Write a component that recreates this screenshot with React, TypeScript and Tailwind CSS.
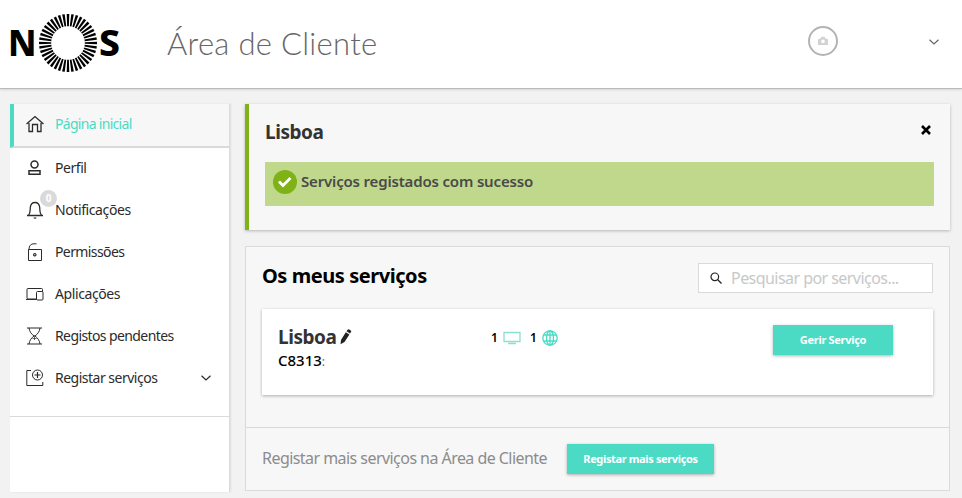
import { ReactNode } from "react";
import clsx from "clsx";

const RAYS = Array.from({ length: 40 }, (_, i) => i * 9);

function Logo() {
  return (
    <svg width="112" height="60" viewBox="-1 0 112 60" className="block">
      <text x="-2" y="43" fontFamily="Noto Sans" fontWeight="800" fontSize="36" textLength="28.5" lengthAdjust="spacingAndGlyphs">N</text>
      {RAYS.map((deg) => (
        <path key={deg} d="M56.700 1h2.600l-.45 12.200h-1.700z" transform={`rotate(${deg} 58 30)`} />
      ))}
      <text x="89" y="43" fontFamily="Noto Sans" fontWeight="800" fontSize="36" textLength="21" lengthAdjust="spacingAndGlyphs">S</text>
    </svg>
  );
}

function Icon({ children, className }: { children: ReactNode; className?: string }) {
  return (
    <svg width="18" height="18" viewBox="0 0 18 18" fill="none" stroke="currentColor" className={clsx("block shrink-0", className)}>
      {children}
    </svg>
  );
}

const HomeIcon = (
  <Icon className="-mt-0.5">
    <path d="M.5 9 9 1.500 17.500 9M3 8v8.500h3.500V9.500h5v7H15V8" strokeWidth="1.300" />
  </Icon>
);
const ProfileIcon = (
  <Icon>
    <circle cx="8.500" cy="5.500" r="3.500" strokeWidth="1.500" />
    <path d="M3 11.800h11v3.400H3z" strokeWidth="1.500" />
  </Icon>
);
const BellIcon = (
  <Icon>
    <path d="M1 14.500h16M2.500 14.300C4.500 12.500 4 10 4.300 6.500 4.600 3.300 6.300 1.500 9 1.500s4.400 1.800 4.700 5c.3 3.500-.2 6 1.800 7.800" strokeWidth="1.300" />
    <path d="M7.500 16.500a1.500 1.300 0 0 0 3 0z" fill="currentColor" stroke="none" />
  </Icon>
);
const LockIcon = (
  <Icon>
    <path d="M2.500 6.500h13v11h-13zM3 6.500C3 2.500 5 .8 8 .8h2.500" />
    <circle cx="8.800" cy="11.700" r="1.200" strokeWidth="1.200" />
  </Icon>
);
const DevicesIcon = (
  <Icon>
    <rect x="1" y="3.500" width="15.500" height="10.500" rx="1" />
    <rect x="10.500" y="6.500" width="6.500" height="8.500" rx="1" fill="#fff" />
    <path d="M0 14.500h10.500" />
  </Icon>
);
const HourglassIcon = (
  <Icon>
    <path d="M1 1h15M1 17h15M3 1c.5 4 2.500 6 5 8-2.500 2-4.500 4-5 8M14 1c-.5 4-2.500 6-5 8 2.500 2 4.500 4 5 8" />
    <path d="M8.500 8v5M6.500 11.500h4" strokeWidth=".7" />
  </Icon>
);
const RegisterIcon = (
  <Icon>
    <path d="M5 1.500H.8v15h16v-3.500" />
    <circle cx="11.500" cy="6" r="5" />
    <path d="M11.500 3v6M8.500 6h6" strokeWidth="1.200" />
  </Icon>
);

const MENU = [
  { title: "Perfil", icon: ProfileIcon, tracking: "tracking-[-0.45px]" },
  { title: "Notificações", icon: BellIcon, badge: 0, tracking: "tracking-[-0.4px]" },
  { title: "Permissões", icon: LockIcon, tracking: "tracking-[-0.6px]" },
  { title: "Aplicações", icon: DevicesIcon, tracking: "tracking-[-0.4px]" },
  { title: "Registos pendentes", icon: HourglassIcon, tracking: "tracking-[-0.6px]" },
  { title: "Registar serviços", icon: RegisterIcon, expandable: true, tracking: "tracking-[-0.5px]" },
];

function Chevron() {
  return (
    <svg width="10" height="6" viewBox="0 0 10 6" fill="none" stroke="currentColor" strokeWidth="1.200" className="block">
      <path d="m.5.700 4.500 4.300L9.500.700" />
    </svg>
  );
}

function Sidebar() {
  return (
    <nav className="h-[388px] w-[220px] shrink-0 border-r border-[#dadada] bg-white text-sm text-[#2b2b2b] shadow-[1px_0_2px_rgba(0,0,0,0.08)]">
      <div className="flex h-11 items-center gap-[11px] border-b-2 border-l-4 border-b-[#dadada] border-l-[#4bdbc5] bg-[#f7f7f7] pl-3">
        {HomeIcon}
        <span className="-mt-0.5 tracking-[-0.7px] text-[#4bdbc5]">Página inicial</span>
      </div>
      <div className="-mt-px h-[270px] border-b border-[#dadada]">
        {MENU.map((item) => (
          <div key={item.title} className="flex h-[42px] items-center pl-4">
            <div className="relative mr-[11px]">
              {item.icon}
              {item.badge !== undefined && (
                <span className="absolute -top-[11px] left-[14px] flex size-[17px] items-center justify-center rounded-full bg-[#dadada] text-[10px] font-bold text-white">
                  {item.badge}
                </span>
              )}
            </div>
            <span className={item.tracking}>{item.title}</span>
            {item.expandable && <div className="mr-[18px] ml-auto"><Chevron /></div>}
          </div>
        ))}
      </div>
    </nav>
  );
}

function SuccessCard() {
  return (
    <section className="h-[126px] border-l-4 border-[#7fb217] bg-[#f7f7f7] px-4 shadow-[0_1px_3px_rgba(0,0,0,0.25)]">
      <div className="flex h-[58px] items-center justify-between">
        <h2 className="-mt-0.5 text-[19px] font-bold tracking-[-0.45px] text-[#333]">Lisboa</h2>
        <svg width="10" height="10" viewBox="0 0 10 10" stroke="#000" strokeWidth="2.600" className="mr-[3px] -mt-[6px]">
          <path d="m1 1 8 8M9 1 1 9" />
        </svg>
      </div>
      <div className="flex h-11 items-center gap-1 bg-[#bfd88b] px-2 pb-1">
        <svg width="24" height="24" viewBox="0 0 24 24" fill="none" className="block">
          <circle cx="12" cy="12" r="12" fill="#7fb217" />
          <path d="m6 11.500 4 4 7.500-7.500" stroke="#fff" strokeWidth="2.800" />
        </svg>
        <p className="-mt-0.5 text-[15px] font-semibold tracking-[-0.17px] text-[#4a4a4a]">Serviços registados com sucesso</p>
      </div>
    </section>
  );
}

function ServicesPanel() {
  return (
    <section className="mt-4 h-[245px] border border-[#dadada] bg-[#f7f7f7]">
      <div className="h-[180px] px-4 pt-4">
        <div className="flex items-center justify-between">
          <h2 className="-mt-1 text-xl font-bold tracking-[-0.45px] text-black">Os meus serviços</h2>
          <div className="flex h-[30px] w-[235px] items-center border border-[#dadada] bg-white pl-[11px] text-base text-[#c8c8c8]">
            <svg width="12" height="12" viewBox="0 0 12 12" fill="none" stroke="#222" strokeWidth="1.200" className="mr-[9px]">
              <circle cx="4.800" cy="4.800" r="3.800" />
              <path d="m7.500 7.500 4 4" />
            </svg>
            <span className="tracking-[-0.55px]">Pesquisar por serviços...</span>
          </div>
        </div>
        <div className="mt-4 flex h-[86px] bg-white p-4 shadow-[0_1px_3px_rgba(0,0,0,0.3)]">
          <div className="w-[213px]">
            <div className="flex h-[25px] items-center gap-1">
              <h3 className="text-[19px] font-bold tracking-[-0.45px] text-[#333]">Lisboa</h3>
              <svg width="12" height="16" viewBox="0 0 12 16" fill="#222" className="-mt-px block">
                <path d="m.5 15.300.5-4.300L5.800 3.300l3.600 2.300-4.900 7.500zM6.500 2.200 7.600.700c.4-.6 1-.7 1.600-.3l1.500 1c.6.400.7 1 .3 1.600l-1 1.600z" />
              </svg>
            </div>
            <p className="-mt-px text-[15px] leading-[22px] font-medium text-black">
              C8313<span className="text-xs font-normal text-[#666]">:</span>
            </p>
          </div>
          <div className="flex h-[26px] items-center text-xs font-semibold text-black">
            <span>1</span>
            <svg width="18" height="14" viewBox="0 0 18 14" fill="none" stroke="#8be0cf" className="mr-[9px] ml-[5px]">
              <path d="M1 1.500h16v9H1zM5 12.500h8" strokeWidth="1.300" />
            </svg>
            <span>1</span>
            <svg width="16" height="16" viewBox="0 0 16 16" fill="none" stroke="#4bdbc5" strokeWidth="1.300" className="ml-[5px]">
              <circle cx="8" cy="8" r="7.200" />
              <ellipse cx="8" cy="8" rx="3.500" ry="7.200" />
              <path d="M8 .8v14.400M1.500 5h13M1.500 11h13" />
            </svg>
          </div>
          <button className="mr-6 ml-auto h-[30px] w-[120px] bg-[#4bdbc5] text-[11px] font-bold tracking-[-0.3px] text-white shadow-[0_1px_3px_rgba(0,0,0,0.3)]">
            Gerir Serviço
          </button>
        </div>
      </div>
      <div className="flex h-[63px] items-center border-t border-[#dadada] px-4">
        <p className="-mt-0.5 w-[305px] text-base tracking-[-0.55px] whitespace-nowrap text-[#8c8c8c]">Registar mais serviços na Área de Cliente</p>
        <button className="h-[30px] w-[147px] bg-[#4bdbc5] text-[11px] font-bold tracking-[-0.36px] text-white shadow-[0_1px_3px_rgba(0,0,0,0.3)]">
          Registar mais serviços
        </button>
      </div>
    </section>
  );
}

export default function App() {
  return (
    <div className="h-[498px] w-[962px] overflow-hidden bg-[#f2f2f2] font-['Noto_Sans',sans-serif]">
      <header className="flex h-[89px] items-center border-b border-[#bababa] bg-white pl-[9px] text-[#666] shadow-[0_1px_2px_rgba(0,0,0,0.12)]">
        <div className="-mt-0.5"><Logo /></div>
        <h1 className="-mt-0.5 ml-[46px] font-['Lato'] text-[31px] font-light tracking-[0.3px]">Área de Cliente</h1>
        <div className="-mt-1.5 ml-auto flex size-[30px] items-center justify-center rounded-full border-2 border-[#b3b3b3]">
          <svg width="10" height="10" viewBox="0 0 10 10" className="block">
            <path d="M0 3.200 2.500 2.500 3.500.8h3l1 1.700 2.500.7V9H0z" fill="#d2d2d2" />
            <circle cx="5" cy="5.400" r="1.800" fill="#fff" />
          </svg>
        </div>
        <div className="mr-[23px] -mt-1 ml-[91px]"><Chevron /></div>
      </header>
      <div className="flex gap-[15px] pt-[15px] pl-[10px]">
        <Sidebar />
        <main className="w-[705px]">
          <SuccessCard />
          <ServicesPanel />
        </main>
      </div>
    </div>
  );
}
